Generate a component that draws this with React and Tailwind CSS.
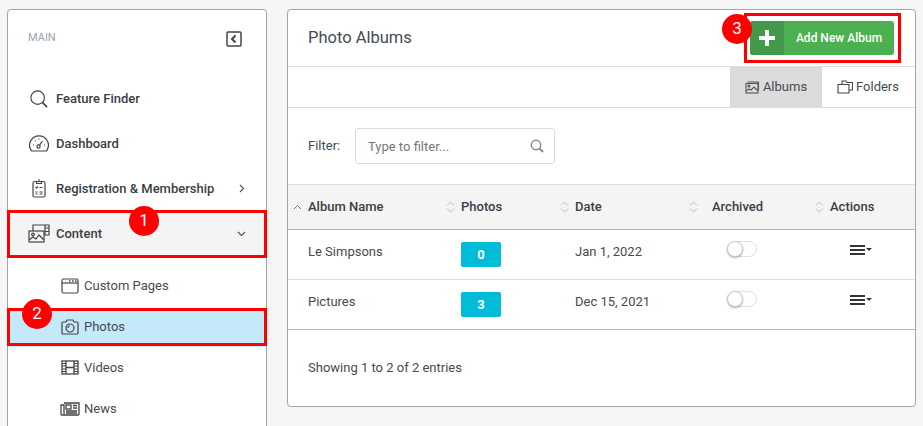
const ICON = 'fill-none stroke-[#444] shrink-0'

function SearchIcon() {
  return (
    <svg width="18" height="18" viewBox="0 0 20 20" className={`${ICON} ml-[2px]`} strokeWidth="1.3">
      <circle cx="8.5" cy="8.5" r="7.5" />
      <path d="M14 14l5 5" strokeWidth="1.8" />
    </svg>
  )
}

function GaugeIcon() {
  return (
    <svg width="20" height="17" viewBox="0 0 20 17" className={`${ICON} ml-px`} strokeWidth="1.2">
      <path d="M3 16h14a2 2 0 0 0 1.2-1.2A9.4 9.4 0 1 0 1.8 14.800 2 2 0 0 0 3 16z" />
      <circle cx="9.5" cy="11.5" r="1.6" />
      <path d="M10.500 10.200l3-4.200M4 10h1M15 10h1M6 5.500l.7.7M10 3.500v1" />
    </svg>
  )
}

function ClipboardIcon() {
  return (
    <svg width="14" height="19" viewBox="0 0 14 19" className={`${ICON} ml-[4px]`} strokeWidth="1.2">
      <rect x="1" y="2.500" width="12" height="15.500" rx="1.500" />
      <path d="M4.500 2.500h5V4.500h-5zM6 1h2M3.500 8l1 1 1.500-1.500M7.500 8.500h3M3.500 13h2M7.500 13h3M3.500 15h2M7.500 15h3" />
    </svg>
  )
}

function ContentIcon() {
  return (
    <svg width="22" height="19" viewBox="0 0 22 19" className={ICON} strokeWidth="1.2">
      <rect x="1" y="7" width="15" height="11" />
      <path d="M5 7V1h16v10h-5M17 1v10M17 4h4M17 7.500h4" />
      <circle cx="5" cy="10.500" r="1.300" />
      <path d="M1 16l4-3 3 2 3-4 5 5" />
    </svg>
  )
}

function PageIcon() {
  return (
    <svg width="18" height="16" viewBox="0 0 18 16" className={`${ICON} ml-px`} strokeWidth="1.2">
      <rect x="1" y="1" width="16" height="14" rx="1.500" />
      <path d="M1 5h16" />
      <path d="M8 3h1.500M11 3h1.500M14 3h1.500" strokeWidth="1.400" />
    </svg>
  )
}

function CameraIcon() {
  return (
    <svg width="18" height="16" viewBox="0 0 18 16" className={`${ICON} ml-px`} strokeWidth="1.2">
      <path d="M2 3h3l1-2h6l1 2h3a1 1 0 0 1 1 1v10a1 1 0 0 1-1 1H2a1 1 0 0 1-1-1V4a1 1 0 0 1 1-1z" />
      <circle cx="9" cy="9" r="4" />
      <path d="M9 7a2 2 0 0 0-2 2" />
    </svg>
  )
}

function FilmIcon() {
  return (
    <svg width="18" height="15" viewBox="0 0 18 15" className={`${ICON} ml-px`} strokeWidth="1.3">
      <rect x="1" y="1" width="16" height="13" />
      <path d="M5 1v13M13 1v13M5 7.500h8" />
      <path d="M1 3.500h4M1 6h4M1 9h4M1 11.500h4M13 3.500h4M13 6h4M13 9h4M13 11.500h4" strokeWidth="1.1" />
    </svg>
  )
}

function NewsIcon() {
  return (
    <svg width="20" height="14" viewBox="0 0 20 14" className={ICON} strokeWidth="1.3">
      <path d="M4 1h15v11a1 1 0 0 1-1 1H2a1 1 0 0 1-1-1V3h3v9" />
      <rect x="6" y="3" width="5" height="4" />
      <path d="M13 3.500h4M13 6h4M6 9h11M6 11h11" />
    </svg>
  )
}

function ImageIcon() {
  return (
    <svg width="15" height="13" viewBox="0 0 15 13" className="fill-none stroke-[#555] shrink-0" strokeWidth="1.1">
      <path d="M2.500 1h11v8" />
      <rect x="1" y="2.500" width="12" height="9.500" />
      <circle cx="4" cy="5" r="1" />
      <path d="M1 10l3-2 2 1 3-3 4 4" />
    </svg>
  )
}

function FolderIcon() {
  return (
    <svg width="16" height="14" viewBox="0 0 16 14" className="fill-none stroke-[#444] shrink-0" strokeWidth="1.1">
      <path d="M5 4V1h4l1 1.500h5.500V10H12" />
      <path d="M1 4.500h11V13H1z" />
    </svg>
  )
}

function SortIcon() {
  return (
    <svg width="9" height="12" viewBox="0 0 9 12" className="fill-none stroke-[#bbb] shrink-0" strokeWidth="1">
      <path d="M1 4.500L4.500 1 8 4.500M1 7.500L4.500 11 8 7.500" />
    </svg>
  )
}

function Marker({ n, className }) {
  return (
    <div className={`absolute w-[30px] h-[30px] rounded-full bg-[#f00] text-white text-[17px] flex items-center justify-center ${className}`}>
      {n}
    </div>
  )
}

function SideItem({ icon, label, right, open }) {
  return (
    <div className={`h-[45px] flex items-center pl-[20px] pr-[21px] ${open ? 'bg-[#f4f4f4]' : ''}`}>
      <div className="w-[28px] flex items-center">{icon}</div>
      <span className="font-medium text-[13px] text-[#3a4045]">{label}</span>
      {right && <span className="ml-auto">{right}</span>}
    </div>
  )
}

function SubItem({ icon, label, active }) {
  return (
    <div className={`h-[41px] flex items-center pl-[52px] ${active ? 'bg-[#c4e9f9] border-t-2 border-t-white pb-[2px]' : ''}`}>
      <div className="w-[24px] flex items-center">{icon}</div>
      <span className="text-[13px] text-[#454b50]">{label}</span>
    </div>
  )
}

function Sidebar() {
  return (
    <aside className="w-[260px] h-[440px] shrink-0 bg-white border border-[#a5a5a5] rounded-[4px] overflow-hidden">
      <div className="h-[66px] flex items-start justify-between pl-[20px] pr-[24px] pt-[21px]">
        <span className="text-[11px] leading-[13px] text-[#9aa3ad]">MAIN</span>
        <svg width="16" height="16" viewBox="0 0 16 16" className="fill-none stroke-[#444]" strokeWidth="1.500">
          <rect x="1" y="1" width="14" height="14" rx="1" />
          <path d="M9.500 4.500L6 8l3.500 3.500" strokeWidth="2" />
        </svg>
      </div>
      <SideItem icon={<SearchIcon />} label="Feature Finder" />
      <SideItem icon={<GaugeIcon />} label="Dashboard" />
      <SideItem
        icon={<ClipboardIcon />}
        label="Registration & Membership"
        right={
          <svg width="6" height="9" viewBox="0 0 6 9" className="fill-none stroke-[#555]" strokeWidth="1.200">
            <path d="M1 1l3.500 3.500L1 8" />
          </svg>
        }
      />
      <SideItem
        open
        icon={<ContentIcon />}
        label="Content"
        right={
          <svg width="9" height="6" viewBox="0 0 9 6" className="fill-none stroke-[#555] translate-x-px" strokeWidth="1.200">
            <path d="M1 1l3.500 3.500L8 1" />
          </svg>
        }
      />
      <div className="h-[9px]" />
      <SubItem icon={<PageIcon />} label="Custom Pages" />
      <SubItem icon={<CameraIcon />} label="Photos" active />
      <SubItem icon={<FilmIcon />} label="Videos" />
      <SubItem icon={<NewsIcon />} label="News" />
    </aside>
  )
}

function HeadCell({ label, sortClass, className }) {
  return (
    <div className={`flex items-center ${className}`}>
      <SortIcon />
      <span className={`font-medium text-[13px] text-[#3a4045] ${sortClass}`}>{label}</span>
    </div>
  )
}

function Row({ name, photos, date, last }) {
  return (
    <div className={`grid grid-cols-[157px_114px_129px_126px_100px] h-[50px] items-center border-b text-[13px] text-[#454b50] ${last ? 'border-[#b5b5b5]' : 'border-[#dedede]'}`}>
      <div className="pl-[20px] -mt-[5px]">{name}</div>
      <div className="pl-[16px]">
        <div className="w-[40px] h-[25px] bg-[#00bcd8] rounded-[2px] text-white font-bold text-[13px] flex items-center justify-center">
          {photos}
        </div>
      </div>
      <div className="pl-[16px] -mt-[5px]">{date}</div>
      <div className="pl-[39px] -mt-[12px]">
        <div className="w-[30px] h-[16px] rounded-full border border-[#e0e0e0] bg-white relative">
          <div className="absolute -left-px -top-px w-[16px] h-[16px] rounded-full bg-white border border-[#ccc] shadow-[0_1px_2px_rgba(0,0,0,0.3)]" />
        </div>
      </div>
      <div className="pl-[36px] -mt-[10px] flex items-center gap-[1px]">
        <div className="w-[15px] flex flex-col gap-[2px]">
          <div className="h-[2px] bg-[#333]" />
          <div className="h-[2px] bg-[#333]" />
          <div className="h-[2px] bg-[#333]" />
        </div>
        <div className="border-x-[3px] border-x-transparent border-t-[3px] border-t-[#333]" />
      </div>
    </div>
  )
}

function Main() {
  return (
    <main className="w-[629px] h-[398px] shrink-0 bg-white border border-[#a5a5a5] rounded-[4px] flex flex-col overflow-hidden">
      <div className="h-[57px] border-b border-[#dedede] flex items-center justify-between pl-[20px] pr-[20px]">
        <h1 className="text-[16.5px] text-[#454b50]">Photo Albums</h1>
        <button className="w-[144px] h-[34px] -mt-[1px] mr-px rounded-[3px] bg-[#4caf50] overflow-hidden flex items-center text-white font-medium text-[12px]">
          <span className="w-[34px] h-full bg-[#43994a] flex items-center justify-center">
            <svg width="16" height="16" viewBox="0 0 16 16" className="fill-white">
              <path d="M6 0h4v6h6v4h-6v6H6v-6H0V6h6z" />
            </svg>
          </span>
          <span className="flex-1 text-center">Add New Album</span>
        </button>
      </div>
      <div className="h-[41px] border-b border-[#dedede] flex justify-end pr-px text-[13px] text-[#454b50]">
        <div className="w-[92px] bg-[#dcdcdc] flex items-center justify-center gap-[3px]">
          <ImageIcon />
          <span>Albums</span>
        </div>
        <div className="w-[92px] flex items-center justify-center gap-[3px]">
          <FolderIcon />
          <span>Folders</span>
        </div>
      </div>
      <div className="h-[77px] flex items-center pl-[20px] border-b border-[#dedede]">
        <span className="w-[47px] text-[13px] text-[#454b50]">Filter:</span>
        <div className="w-[200px] h-[36px] border border-[#dcdcdc] rounded-[3px] flex items-center justify-between pl-[12px] pr-[10px]">
          <span className="text-[13px] text-[#777] mt-px">Type to filter...</span>
          <svg width="14" height="14" viewBox="0 0 14 14" className="fill-none stroke-[#8a8a8a]" strokeWidth="1.500">
            <circle cx="6" cy="6" r="4.700" />
            <path d="M9.500 9.500L13 13" strokeWidth="2" />
          </svg>
        </div>
      </div>
      <div className="grid grid-cols-[157px_114px_129px_126px_100px] h-[45px] items-center bg-[#f4f4f4] border-b border-[#b5b5b5]">
        <div className="flex items-center pl-[5px]">
          <svg width="9" height="6" viewBox="0 0 9 6" className="fill-none stroke-[#777] shrink-0" strokeWidth="1">
            <path d="M1 5l3.500-3.500L8 5" />
          </svg>
          <span className="ml-[6px] font-medium text-[13px] text-[#3a4045]">Album Name</span>
        </div>
        <HeadCell label="Photos" sortClass="ml-[6px]" className="pl-[1px]" />
        <HeadCell label="Date" sortClass="ml-[6px]" className="pl-[1px]" />
        <HeadCell label="Archived" sortClass="ml-[14px]" className="pl-[1px]" />
        <HeadCell label="Actions" sortClass="ml-[6px]" className="pl-[1px]" />
      </div>
      <Row name="Le Simpsons" photos="0" date="Jan 1, 2022" />
      <Row name="Pictures" photos="3" date="Dec 15, 2021" last />
      <div className="flex-1 flex items-center pl-[20px] text-[13px] text-[#454b50]">Showing 1 to 2 of 2 entries</div>
    </main>
  )
}

export default function App() {
  return (
    <div className="relative w-[923px] h-[426px] overflow-hidden bg-[#f5f5f5] font-['Roboto',sans-serif]">
      <div className="flex items-start gap-[20px] pl-[7px] pt-[9px]">
        <Sidebar />
        <Main />
      </div>

      {/* tutorial callouts over the page */}
      <div className="absolute left-[7px] top-[210px] w-[260px] h-[48px] border-[3px] border-[#f00]" />
      <div className="absolute left-[7px] top-[308px] w-[260px] h-[38px] border-[3px] border-[#f00]" />
      <div className="absolute left-[744px] top-[13px] w-[157px] h-[50px] border-[3px] border-[#f00]" />
      <Marker n="1" className="left-[129px] top-[206px]" />
      <Marker n="2" className="left-[22px] top-[299px]" />
      <Marker n="3" className="left-[722px] top-[14px]" />
    </div>
  )
}
